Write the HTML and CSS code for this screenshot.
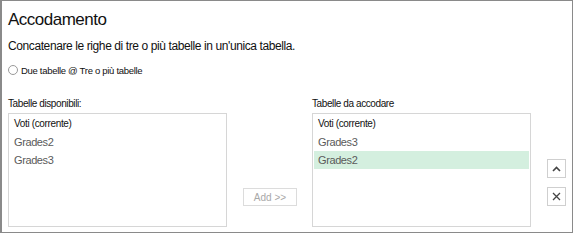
FILE: index.html
```html
<!DOCTYPE html>
<html>
<head>
<meta charset="utf-8">
<link rel="stylesheet" href="styles.css">
</head>
<body>
<div class="frame">
  <h1 class="title">Accodamento</h1>
  <p class="subtitle">Concatenare le righe di tre o più tabelle in un'unica tabella.</p>
  <div class="radio-row"><span class="radio"></span><span class="radio-text">Due tabelle @ Tre o più tabelle</span></div>
  <div class="panes">
    <div class="pane">
      <div class="label">Tabelle disponibili:</div>
      <div class="list">
        <div class="item current">Voti (corrente)</div>
        <div class="item">Grades2</div>
        <div class="item">Grades3</div>
      </div>
    </div>
    <div class="middle">
      <button class="add">Add &gt;&gt;</button>
    </div>
    <div class="pane">
      <div class="label">Tabelle da accodare</div>
      <div class="list">
        <div class="item current">Voti (corrente)</div>
        <div class="item">Grades3</div>
        <div class="item selected">Grades2</div>
      </div>
    </div>
    <div class="side">
      <button class="icon-btn" aria-label="Su"><svg width="9" height="6" viewBox="0 0 9 6"><path d="M1 5 L4.5 1.5 L8 5" fill="none" stroke="#444" stroke-width="1.6"/></svg></button>
      <button class="icon-btn" aria-label="Rimuovi"><svg width="9" height="9" viewBox="0 0 9 9"><path d="M1 1 L8 8 M8 1 L1 8" fill="none" stroke="#444" stroke-width="1.3"/></svg></button>
    </div>
  </div>
</div>
</body>
</html>
```
FILE: styles.css
```css
html, body {
  margin: 0;
  padding: 0;
  background: #fff;
}
body {
  font-family: "Liberation Sans", Arial, sans-serif;
  color: #111;
}
.frame {
  box-sizing: border-box;
  width: 573px;
  height: 233px;
  border: 1px solid #8a8a8a;
  border-left-width: 2px;
  padding: 0 0 0 6px;
}
.title {
  margin: 8px 0 0 0;
  font-size: 17px;
  font-weight: 400;
  line-height: 22px;
  letter-spacing: -0.5px;
}
.subtitle {
  margin: 7px 0 0 0;
  font-size: 12px;
  line-height: 16px;
  letter-spacing: -0.4px;
}
.radio-row {
  display: flex;
  align-items: center;
  margin-top: 10px;
  height: 12px;
}
.radio {
  box-sizing: border-box;
  width: 10px;
  height: 10px;
  border: 1px solid #9a9a9a;
  border-radius: 50%;
  margin-right: 3px;
}
.radio-text {
  font-size: 9.5px;
  letter-spacing: -0.3px;
}
.panes {
  display: flex;
  margin-top: 21px;
}
.pane {
  display: flex;
  flex-direction: column;
}
.label {
  font-size: 10px;
  line-height: 13px;
  letter-spacing: -0.4px;
  height: 16px;
}
.list {
  box-sizing: border-box;
  width: 219px;
  height: 114px;
  border: 1px solid #d6d6d6;
  padding: 1px 1px;
}
.item {
  height: 18px;
  line-height: 18px;
  padding-left: 4px;
  font-size: 11px;
  letter-spacing: -0.4px;
  color: #5a5a5a;
}
.item.current {
  font-size: 10px;
  color: #111;
  letter-spacing: -0.35px;
}
.item.selected {
  background: #d4efdf;
}
.middle {
  width: 85px;
  display: flex;
  align-items: flex-end;
  padding-left: 16px;
  box-sizing: border-box;
  padding-bottom: 21px;
}
.add {
  box-sizing: border-box;
  width: 54px;
  height: 18px;
  border: 1px solid #dcdcdc;
  background: #fff;
  color: #a8a8a8;
  font-family: inherit;
  font-size: 10px;
  padding: 0;
}
.side {
  display: flex;
  flex-direction: column;
  gap: 9px;
  margin-left: 16px;
  padding-top: 62px;
}
.icon-btn {
  box-sizing: border-box;
  width: 19px;
  height: 19px;
  border: 1px solid #cfcfcf;
  background: #fff;
  padding: 0;
  display: flex;
  align-items: center;
  justify-content: center;
}
```
